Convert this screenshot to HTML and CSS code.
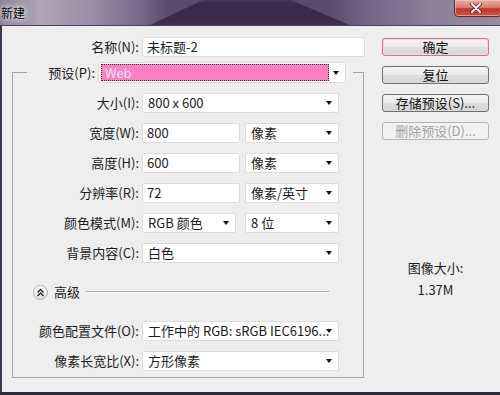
FILE: index.html
```html
<!DOCTYPE html>
<html lang="zh-CN">
<head>
    <meta charset="UTF-8">
    <title>新建</title>
    <link rel="stylesheet" href="styles.css">
</head>
<body>
    <div class="window">
        <!-- title bar -->
        <div class="titlebar">
            <span class="title">新建</span>
            <div class="close">
                <svg width="12" height="10" viewBox="0 0 12 10">
                    <path d="M2 1 L10 9 M10 1 L2 9" stroke="#5a2020" stroke-width="3.6" stroke-linecap="round"/>
                    <path d="M2 1 L10 9 M10 1 L2 9" stroke="#fff" stroke-width="2" stroke-linecap="round"/>
                </svg>
            </div>
        </div>

        <div class="content">
            <div class="form">
                <div class="row name-row">
                    <span class="label outer">名称(N):</span>
                    <div class="field name">未标题-2</div>
                </div>

                <fieldset class="frame">
                    <legend class="preset">
                        <div class="preset-row">
                            <span class="label short">预设(P):</span>
                            <div class="select preset-select">
                                <span class="focus">Web</span>
                                <i class="arrow"></i>
                            </div>
                        </div>
                    </legend>

                    <div class="row first">
                        <span class="label">大小(I):</span>
                        <div class="select full">800 x 600<i class="arrow"></i></div>
                    </div>
                    <div class="row">
                        <span class="label">宽度(W):</span>
                        <div class="field num">800</div>
                        <div class="select unit">像素<i class="arrow"></i></div>
                    </div>
                    <div class="row">
                        <span class="label">高度(H):</span>
                        <div class="field num">600</div>
                        <div class="select unit">像素<i class="arrow"></i></div>
                    </div>
                    <div class="row">
                        <span class="label">分辨率(R):</span>
                        <div class="field num">72</div>
                        <div class="select unit">像素/英寸<i class="arrow"></i></div>
                    </div>
                    <div class="row">
                        <span class="label">颜色模式(M):</span>
                        <div class="select mode">RGB 颜色<i class="arrow"></i></div>
                        <div class="select unit bits">8 位<i class="arrow"></i></div>
                    </div>
                    <div class="row">
                        <span class="label">背景内容(C):</span>
                        <div class="select full">白色<i class="arrow"></i></div>
                    </div>

                    <div class="advanced">
                        <span class="toggle">
                            <svg width="9" height="9" viewBox="0 0 9 9">
                                <path d="M1.5 4.5 L4.5 1.5 L7.5 4.5 M1.5 8 L4.5 5 L7.5 8" fill="none" stroke="#222" stroke-width="1.4"/>
                            </svg>
                        </span>
                        <span class="adv-text">高级</span>
                        <span class="rule"></span>
                    </div>

                    <div class="row">
                        <span class="label">颜色配置文件(O):</span>
                        <div class="select full">工作中的 RGB: sRGB IEC6196...<i class="arrow"></i></div>
                    </div>
                    <div class="row last">
                        <span class="label">像素长宽比(X):</span>
                        <div class="select full">方形像素<i class="arrow"></i></div>
                    </div>
                </fieldset>
            </div>

            <div class="side">
                <div class="btn default">确定</div>
                <div class="btn">复位</div>
                <div class="btn">存储预设(S)...</div>
                <div class="btn disabled">删除预设(D)...</div>

                <div class="info">
                    <div>图像大小:</div>
                    <div>1.37M</div>
                </div>
            </div>
        </div>
    </div>
</body>
</html>
```

FILE: styles.css
```css
/* dialog window */
* {
    margin: 0;
    padding: 0;
    box-sizing: border-box;
}

body {
    width: 500px;
    height: 395px;
    overflow: hidden;
    font-family: "Noto Sans CJK SC", "Noto Sans", sans-serif;
    font-size: 13px;
    color: #1c1c1c;
    background: #2f2a3a;
}

.window {
    width: 500px;
    height: 392px;
}

.titlebar {
    position: relative;
    height: 26px;
    overflow: hidden;
    background: linear-gradient(to right, #8a8294 0%, #aea6b6 8%, #9a90a6 18%, #76698a 28%, #5a4a6c 34%, #5a4a6c 66%, #74688a 74%, #8a8098 86%, #958ca2 100%);
    border-bottom: 1px solid #4a4058;
}

.titlebar::before {
    content: "";
    position: absolute;
    left: 148px;
    top: 0;
    width: 204px;
    height: 26px;
    background: #3a2a4c;
    clip-path: polygon(27% 0, 70% 0, 100% 100%, 0 100%);
    filter: blur(2px);
}

.title {
    position: relative;
    display: block;
    padding-left: 1px;
    font-size: 12px;
    line-height: 25px;
    color: #000;
    text-shadow: 0 0 4px #fff, 0 0 8px #fff;
}

.close {
    position: absolute;
    top: -1px;
    left: 454px;
    width: 48px;
    height: 18px;
    border: 1px solid #5a2a2e;
    border-radius: 0 0 4px 4px;
    background: linear-gradient(#e6aa9c 0%, #d88270 45%, #c2382a 55%, #d0503e 100%);
    box-shadow: inset 0 0 0 1px rgba(255, 220, 210, 0.5);
    display: flex;
    align-items: center;
    justify-content: center;
    padding-right: 4px;
}

.content {
    display: flex;
    gap: 17px;
    height: 366px;
    background: #eeeeee;
    border-left: 2px solid #3a3548;
}

/* left form */
.form {
    width: 363px;
    padding-top: 11px;
}

.row {
    display: flex;
    align-items: center;
    height: 20px;
    margin-bottom: 10px;
}

.row.name-row {
    margin-bottom: 5px;
}

.row.last {
    margin-bottom: 0;
}

.label {
    width: 129px;
    padding-right: 3px;
    text-align: right;
    line-height: 20px;
    white-space: nowrap;
}

.label.outer {
    width: 140px;
}

.field, .select {
    position: relative;
    height: 20px;
    background: #fff;
    border: 1px solid #dcdcdc;
    border-radius: 2px;
    padding: 0 5px;
    line-height: 18px;
    white-space: nowrap;
}

.field {
    padding-left: 4px;
}

.name {
    width: 223px;
}

.num {
    width: 98px;
}

.unit {
    width: 94px;
    margin-left: 5px;
}

.unit.bits {
    margin-left: 9px;
}

.mode {
    width: 94px;
}

.full {
    width: 197px;
}

.arrow {
    position: absolute;
    right: 6px;
    top: 7px;
    border-left: 3px solid transparent;
    border-right: 3px solid transparent;
    border-top: 4px solid #111;
}

/* frame with preset legend */
.frame {
    margin-left: 10px;
    width: 352px;
    padding: 0 0 6px 0;
    border: 1px solid #a4a4a4;
}

.preset {
    margin-left: 14px;
    padding: 0 7px 0 0;
}

.preset-row {
    display: flex;
    align-items: center;
    height: 21px;
}

.label.short {
    width: 71px;
}

.preset-select {
    width: 248px;
    height: 21px;
    padding: 1px 2px;
}

.focus {
    display: block;
    width: 228px;
    height: 17px;
    background: #ff80c2;
    border: 1px dotted #333;
    color: #ffe4f2;
    padding-left: 3px;
    line-height: 15px;
}

.preset-select .arrow {
    top: 8px;
}

.row.first {
    margin-top: 10px;
}

/* advanced toggle */
.advanced {
    display: flex;
    align-items: center;
    height: 20px;
    margin: 19px 0 19px 20px;
}

.toggle {
    width: 15px;
    height: 15px;
    border-radius: 50%;
    border: 1px solid #b0b0b0;
    background: linear-gradient(#ffffff, #dedede);
    display: flex;
    align-items: center;
    justify-content: center;
}

.adv-text {
    margin-left: 6px;
    line-height: 20px;
}

.rule {
    flex: 1;
    height: 2px;
    margin: 0 34px 0 6px;
    border-top: 1px solid #a8a8a8;
    border-bottom: 1px solid #fff;
}

/* right buttons */
.side {
    width: 107px;
    padding-top: 12px;
}

.btn {
    height: 18px;
    margin-bottom: 10px;
    border: 1px solid #707070;
    border-radius: 3px;
    background: linear-gradient(#f4f4f4 0%, #ececec 50%, #dedede 51%, #d6d6d6 100%);
    text-align: center;
    line-height: 16px;
    color: #111;
}

.btn.default {
    border-color: #c07a90;
    box-shadow: inset 0 0 0 1px #f6d6e0;
}

.btn.disabled {
    border-color: #b0b4b8;
    background: #f2f2f2;
    color: #a2a2a2;
}

.info {
    margin-top: 117px;
    text-align: center;
    line-height: 22px;
}
```
